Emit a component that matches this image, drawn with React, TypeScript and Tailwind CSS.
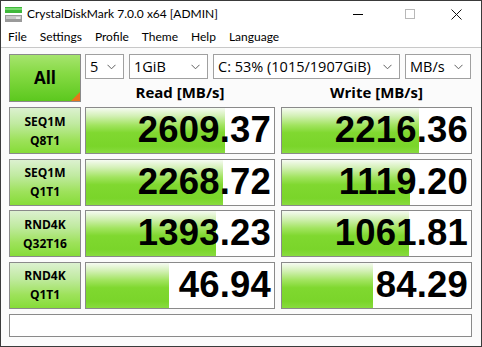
import React from "react";

const rows = [
  { l1: "SEQ1M", l2: "Q8T1", r: 2609.37, w: 2216.36 },
  { l1: "SEQ1M", l2: "Q1T1", r: 2268.72, w: 1119.2 },
  { l1: "RND4K", l2: "Q32T16", r: 1393.23, w: 1061.81 },
  { l1: "RND4K", l2: "Q1T1", r: 46.94, w: 84.29 },
];

function barWidth(v: number, cellW: number) {
  const f = (Math.log10(v) + 0.88) / 5.81;
  return Math.round(Math.max(0, Math.min(1, f)) * (cellW - 2));
}

function Chevron() {
  return (
    <svg width="9" height="6" viewBox="0 0 9 6" className="shrink-0">
      <path d="M0.5 0.8 L4.5 4.8 L8.5 0.8" fill="none" stroke="#606060" strokeWidth="1" />
    </svg>
  );
}

function Select({ w, text }: { w: string; text: string }) {
  return (
    <div className={`${w} h-[25px] border border-[#a0a0a0] bg-white flex items-center justify-between pl-[4px] pr-[7px] text-[14.5px] text-black`}>
      <span className="whitespace-nowrap">{text}</span>
      <Chevron />
    </div>
  );
}

function ValueCell({ v, w }: { v: number; w: number }) {
  const bw = barWidth(v, w);
  return (
    <div className="relative h-[47px] border border-[#8a8a8a] bg-white overflow-hidden" style={{ width: w }}>
      <div
        className="absolute left-0 top-0 bottom-0 bg-[linear-gradient(to_bottom,#f6fbf2_0%,#d2f0b4_18%,#a2e460_38%,#80d830_55%,#7ad52a_85%,#88dc3e_100%)]"
        style={{ width: bw }}
      />
      <div className="relative h-full flex items-center justify-end pr-[3px] font-['Liberation_Sans',Arial,sans-serif] font-bold text-[36.5px] leading-none text-black tracking-[0.2px]">
        {v.toFixed(2)}
      </div>
    </div>
  );
}

export default function App() {
  return (
    <div className="w-[482px] h-[347px] bg-white border border-[#3a3a3a] flex flex-col overflow-hidden font-['Open_Sans','Noto_Sans',sans-serif] text-black">
      {/* title bar */}
      <div className="h-[26px] flex items-center shrink-0">
        <svg width="17" height="15" viewBox="0 0 17 15" className="ml-[4px] mt-[1px]">
          <rect x="0" y="0" width="17" height="6" fill="#3fb83a" />
          <rect x="0" y="1" width="17" height="2" fill="#78d870" />
          <rect x="0" y="8" width="17" height="7" fill="#9a9a9a" />
          <rect x="1" y="9" width="15" height="3" fill="#c8c8c8" />
          <rect x="11" y="10" width="4" height="2" fill="#e8e8e8" />
        </svg>
        <span className="ml-[5px] font-['Lato',sans-serif] text-[12px]">CrystalDiskMark 7.0.0 x64 [ADMIN]</span>
        <div className="ml-auto flex items-center">
          <div className="w-[46px] flex justify-center">
            <div className="w-[10px] h-px bg-black" />
          </div>
          <div className="w-[46px] flex justify-center ml-[6px]">
            <div className="w-[10px] h-[10px] border border-[#b8b8b8]" />
          </div>
          <div className="w-[46px] flex justify-center mr-[2px]">
            <svg width="11" height="11" viewBox="0 0 11 11">
              <path d="M0.5 0.5 L10.5 10.5 M10.5 0.5 L0.5 10.5" stroke="#111" strokeWidth="1" />
            </svg>
          </div>
        </div>
      </div>
      {/* menu */}
      <div className="h-[20px] flex items-center gap-[13px] pl-[7px] font-['Lato',sans-serif] text-[12px] shrink-0">
        <span>File</span>
        <span>Settings</span>
        <span>Profile</span>
        <span>Theme</span>
        <span>Help</span>
        <span>Language</span>
      </div>
      {/* content */}
      <div className="flex-1 border-t border-[#c8c8c8] bg-[#fbfbfb] pl-[8px] pt-[6px] flex flex-col">
        <div className="flex gap-[4px]">
          <div className="relative w-[72px] h-[48px] border border-[#8a8a8a] bg-[linear-gradient(to_bottom,#a6e46e_0%,#86da44_40%,#5cc81e_100%)] flex items-center justify-center font-['Open_Sans',sans-serif] font-bold text-[17px]">
            All
            <div className="absolute right-0 bottom-0 w-0 h-0 border-l-[9px] border-l-transparent border-b-[9px] border-b-[#e8741c]" />
          </div>
          <div className="flex flex-col">
            <div className="flex gap-[5px]">
              <Select w="w-[39px]" text="5" />
              <Select w="w-[79px]" text="1GiB" />
              <Select w="w-[187px]" text="C: 53% (1015/1907GiB)" />
              <Select w="w-[66px]" text="MB/s" />
            </div>
            <div className="flex gap-[6px] mt-[3px] h-[20px] items-center font-['Open_Sans',sans-serif] font-bold text-[15px]">
              <div className="w-[190px] text-center">Read [MB/s]</div>
              <div className="w-[191px] text-center">Write [MB/s]</div>
            </div>
          </div>
        </div>
        <div className="flex flex-col gap-[4.6px] mt-[5px]">
          {rows.map((r, i) => (
            <div key={i} className="flex gap-[4px]">
              <div className="w-[72px] h-[47px] border border-[#8a8a8a] bg-[linear-gradient(to_bottom,#dcf1d0_0%,#c0eaa0_35%,#9ee25c_70%,#86dc38_100%)] flex flex-col items-center justify-center font-['Open_Sans',sans-serif] font-bold text-[12px] leading-[19px]">
                <span>{r.l1}</span>
                <span>{r.l2}</span>
              </div>
              <ValueCell v={r.r} w={190} />
              <div className="ml-[2px] flex">
                <ValueCell v={r.w} w={191} />
              </div>
            </div>
          ))}
        </div>
        <div className="mt-[5px] w-[463px] h-[23px] border border-[#8a8a8a] bg-white" />
      </div>
    </div>
  );
}
